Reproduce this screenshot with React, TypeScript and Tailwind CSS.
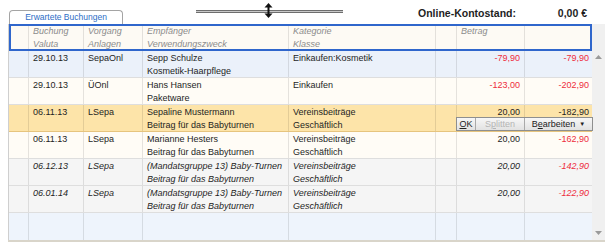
import React from "react";

type Row = {
  bg: string;
  date: string;
  typ: string;
  name: string;
  purpose: string;
  cat: string;
  cls: string;
  amount: string;
  balance: string;
  amountRed?: boolean;
  balanceRed?: boolean;
  italic?: boolean;
  selected?: boolean;
};

const rows: Row[] = [
  {
    bg: "bg-[#ebf1fa]",
    date: "29.10.13",
    typ: "SepaOnl",
    name: "Sepp Schulze",
    purpose: "Kosmetik-Haarpflege",
    cat: "Einkaufen:Kosmetik",
    cls: "",
    amount: "-79,90",
    balance: "-79,90",
    amountRed: true,
    balanceRed: true,
  },
  {
    bg: "bg-[#fffcf6]",
    date: "29.10.13",
    typ: "ÜOnl",
    name: "Hans Hansen",
    purpose: "Paketware",
    cat: "Einkaufen",
    cls: "",
    amount: "-123,00",
    balance: "-202,90",
    amountRed: true,
    balanceRed: true,
  },
  {
    bg: "bg-[#fde4a9]",
    date: "06.11.13",
    typ: "LSepa",
    name: "Sepaline Mustermann",
    purpose: "Beitrag für das Babyturnen",
    cat: "Vereinsbeiträge",
    cls: "Geschäftlich",
    amount: "20,00",
    balance: "-182,90",
    selected: true,
  },
  {
    bg: "bg-[#fffcf6]",
    date: "06.11.13",
    typ: "LSepa",
    name: "Marianne Hesters",
    purpose: "Beitrag für das Babyturnen",
    cat: "Vereinsbeiträge",
    cls: "Geschäftlich",
    amount: "20,00",
    balance: "-162,90",
    balanceRed: true,
  },
  {
    bg: "bg-[#f5f5f5]",
    date: "06.12.13",
    typ: "LSepa",
    name: "(Mandatsgruppe 13) Baby-Turnen",
    purpose: "Beitrag für das Babyturnen",
    cat: "Vereinsbeiträge",
    cls: "Geschäftlich",
    amount: "20,00",
    balance: "-142,90",
    balanceRed: true,
    italic: true,
  },
  {
    bg: "bg-[#f5f5f5]",
    date: "06.01.14",
    typ: "LSepa",
    name: "(Mandatsgruppe 13) Baby-Turnen",
    purpose: "Beitrag für das Babyturnen",
    cat: "Vereinsbeiträge",
    cls: "Geschäftlich",
    amount: "20,00",
    balance: "-122,90",
    balanceRed: true,
    italic: true,
  },
];

const grid =
  "grid grid-cols-[20px_55px_59px_146px_147px_21px_68px_68px] h-[27px]";

const Cell = ({
  top,
  bottom,
  right,
  className = "",
}: {
  top?: string;
  bottom?: string;
  right?: boolean;
  className?: string;
}) => (
  <div
    className={`flex flex-col pt-[1px] leading-[13px] border-r border-black/10 overflow-hidden whitespace-nowrap ${
      right ? "items-end pr-[4px]" : "pl-[4px]"
    } ${className}`}
  >
    <span>{top}</span>
    <span>{bottom}</span>
  </div>
);

const ActionBar = () => (
  <div className="absolute right-[-1px] bottom-0 flex h-[14px] w-[137px] border border-[#8e8f8f] bg-gradient-to-b from-[#f7f7f7] to-[#e2e2e2] leading-[12px] text-[#222]">
    <div className="flex w-[19px] justify-center border-r border-[#a9a9a9]">
      <span>
        <span className="underline">O</span>K
      </span>
    </div>
    <div className="flex w-[49px] justify-center border-r border-[#a9a9a9] text-[#b5b5b5]">
      <span>
        S<span className="underline">p</span>litten
      </span>
    </div>
    <div className="flex flex-1 items-center justify-center gap-[4px]">
      <span>
        B<span className="underline">e</span>arbeiten
      </span>
      <span className="text-[6px] leading-[6px]">▼</span>
    </div>
  </div>
);

const App: React.FC = () => {
  return (
    <main className="w-[610px] h-[244px] bg-white overflow-hidden font-['Tahoma','Liberation_Sans',sans-serif] text-[9px] text-[#1e1e1e]">
      {/* top bar: tab, splitter, balance */}
      <div className="flex h-[24px] items-start">
        <div className="ml-[9px] mt-[10px] flex h-[14px] w-[114px] items-center justify-center rounded-t-[4px] border border-b-0 border-[#a4a4a4] bg-white text-[8.5px] text-[#2d6ec6]">
          Erwartete Buchungen
        </div>

        <div className="relative ml-[73px] mt-[2px] h-[17px] w-[147px]">
          <div className="absolute left-0 right-0 top-[8px] h-[3px] border-y border-[#6e6e6e] bg-[#c8c8c8]" />
          <svg
            className="absolute left-[68px] top-[1px]"
            width="9"
            height="15"
            viewBox="0 0 9 15"
          >
            <path d="M4.5 0 L8.5 4.5 H0.5 Z" fill="#111" />
            <path d="M4.5 15 L8.5 10.5 H0.5 Z" fill="#111" />
            <rect x="3.5" y="4" width="2" height="7" fill="#111" />
          </svg>
        </div>

        <div className="ml-[75px] mt-[7px] text-[10.5px] font-bold leading-[13px]">
          Online-Kontostand:
        </div>
        <div className="ml-auto mr-[23px] mt-[7px] text-[10.5px] font-bold leading-[13px]">
          0,00 €
        </div>
      </div>

      {/* table + scrollbar */}
      <div className="ml-[8px] flex w-[597px] border-b-2 border-[#d9d5ca]">
        <div className="w-[584px] border-l border-[#cfcfcf]">
          {/* header */}
          <div
            className={`${grid} h-[26px] bg-[#fdfaf4] italic text-[#8c8c8c] outline-2 -outline-offset-2 outline-[#2f66cc]`}
          >
            <Cell className="border-black/5" />
            <Cell className="border-black/5" top="Buchung" bottom="Valuta" />
            <Cell className="border-black/5" top="Vorgang" bottom="Anlagen" />
            <Cell className="border-black/5" top="Empfänger" bottom="Verwendungszweck" />
            <Cell className="border-black/5" top="Kategorie" bottom="Klasse" />
            <Cell className="border-black/5" />
            <Cell className="border-black/5 pl-[2px]" top="Betrag" />
            <Cell className="border-r-0" />
          </div>

          {rows.map((r, i) => (
            <div
              key={i}
              className={`${grid} relative ${r.bg} border-b ${
                r.selected ? "border-[#e6c47e]" : "border-[#dedede]"
              } ${r.italic ? "italic" : ""}`}
            >
              <Cell />
              <Cell top={r.date} />
              <Cell top={r.typ} />
              <Cell top={r.name} bottom={r.purpose} />
              <Cell top={r.cat} bottom={r.cls} />
              <Cell />
              <Cell
                right
                top={r.amount}
                className={r.amountRed ? "text-[#ee2c3c]" : ""}
              />
              <Cell
                right
                top={r.balance}
                className={`border-r-0 ${r.balanceRed ? "text-[#ee2c3c]" : ""}`}
              />
              {r.selected && <ActionBar />}
            </div>
          ))}

          {/* empty row */}
          <div className={`${grid} bg-[#eef4fc]`}>
            <Cell />
            <Cell />
            <Cell />
            <Cell />
            <Cell />
            <Cell />
            <Cell />
            <Cell className="border-r-0" />
          </div>
        </div>

        {/* scrollbar */}
        <div className="flex w-[13px] flex-col items-center justify-between bg-[#f0f0f0] pt-[31px] pb-[5px]">
          <svg width="7" height="4" viewBox="0 0 7 4">
            <path d="M3.5 0 L7 4 H0 Z" fill="#9a9a9a" />
          </svg>
          <svg width="7" height="4" viewBox="0 0 7 4">
            <path d="M0 0 H7 L3.5 4 Z" fill="#9a9a9a" />
          </svg>
        </div>
      </div>
    </main>
  );
};

export default App;
